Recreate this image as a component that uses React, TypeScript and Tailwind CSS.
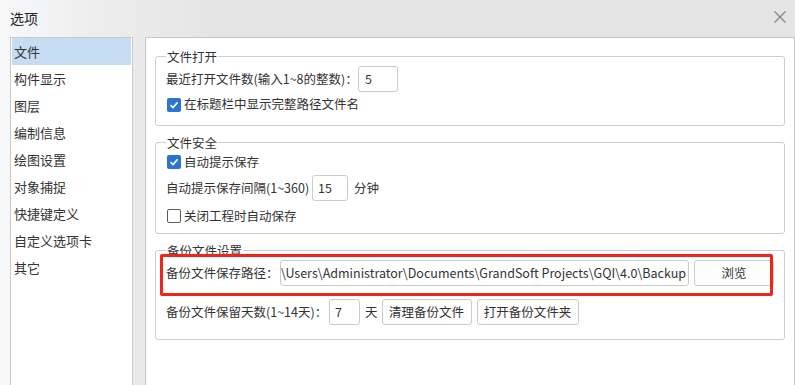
import type { ReactNode } from 'react'

const navItems = ['文件', '构件显示', '图层', '编制信息', '绘图设置', '对象捕捉', '快捷键定义', '自定义选项卡', '其它']

function CheckBox({ checked, label }: { checked?: boolean; label: string }) {
  return (
    <div className="flex items-center">
      {checked ? (
        <span className="ml-[1px] flex h-[14px] w-[14px] items-center justify-center rounded-[2px] bg-[#2a74d6]">
          <svg width="10" height="10" viewBox="0 0 10 10">
            <path d="M1.5 5.2 L4 7.6 L8.6 2.4" fill="none" stroke="#fff" strokeWidth="1.6" />
          </svg>
        </span>
      ) : (
        <span className="ml-[1px] h-[14px] w-[14px] rounded-[2px] border border-[#5a5a5a] bg-white" />
      )}
      <span className="ml-[3px]">{label}</span>
    </div>
  )
}

function Group({ title, children, className }: { title: string; children: ReactNode; className?: string }) {
  return (
    <fieldset className={`rounded-[3px] border border-[#cfcfcf] px-[10px] ${className ?? ''}`}>
      <legend className="px-[1px] leading-[17px]">{title}</legend>
      {children}
    </fieldset>
  )
}

function Button({ label, w }: { label: string; w: string }) {
  return (
    <div
      className={`flex h-[26px] shrink-0 items-center justify-center rounded-[3px] border border-[#cbcbcb] bg-[#fdfdfd] ${w}`}
    >
      {label}
    </div>
  )
}

export default function App() {
  return (
    <div
      className="flex h-[385px] w-[795px] flex-col overflow-hidden bg-[linear-gradient(90deg,#f7f8fa_0px,#ececec_110px,#e4e4e4_220px)] text-[12.5px] text-[#333]"
      style={{ fontFamily: '"Noto Sans CJK SC", "Noto Sans", sans-serif' }}
    >
      {/* Title bar */}
      <div className="flex h-[37px] shrink-0 items-center justify-between pl-[10px] pr-[9px]">
        <span className="text-[14px] text-[#222]">选项</span>
        <svg width="12" height="12" viewBox="0 0 12 12" className="mb-[4px]">
          <path d="M0.5 0.5 L11.5 11.5 M11.5 0.5 L0.5 11.5" stroke="#808080" strokeWidth="1.1" />
        </svg>
      </div>

      <div className="flex flex-1 pl-[10px] pr-[2px]">
        {/* Left nav */}
        <div className="w-[123px] shrink-0 border border-b-0 border-[#c9c9c9] bg-white p-[1px] pt-0 text-[13px]">
          {navItems.map((item, i) => (
            <div
              key={item}
              className={`flex h-[27px] items-center pl-[2px] ${i === 0 ? 'bg-[#c5dcf2]' : ''}`}
            >
              {item}
            </div>
          ))}
        </div>

        {/* Right panel */}
        <div className="ml-[12px] flex-1 border border-b-0 border-[#c6c6c6] bg-white pl-[9px] pr-[9px] pt-[10px]">
          <Group title="文件打开">
            <div className="flex h-[28px] items-center">
              <span className="w-[192px] shrink-0 whitespace-nowrap">最近打开文件数(输入1~8的整数)：</span>
              <div className="flex h-[26px] w-[40px] items-center rounded-[3px] border border-[#cbcbcb] pl-[6px]">5</div>
            </div>
            <div className="flex h-[24px] items-center pb-[1px]">
              <CheckBox checked label="在标题栏中显示完整路径文件名" />
            </div>
            <div className="h-[8px]" />
          </Group>

          <Group title="文件安全" className="mt-[8px]">
            <div className="flex h-[22px] items-center">
              <CheckBox checked label="自动提示保存" />
            </div>
            <div className="flex h-[30px] items-center">
              <span className="w-[146px] shrink-0 whitespace-nowrap">自动提示保存间隔(1~360)</span>
              <div className="flex h-[26px] w-[36px] items-center rounded-[3px] border border-[#cbcbcb] pl-[5px]">15</div>
              <span className="ml-[6px]">分钟</span>
            </div>
            <div className="flex h-[26px] items-center">
              <CheckBox label="关闭工程时自动保存" />
            </div>
            <div className="h-[4px]" />
          </Group>

          <Group title="备份文件设置" className="mt-[8px]">
            <div className="relative flex h-[28px] items-center">
              <span className="w-[114px] shrink-0 whitespace-nowrap">备份文件保存路径：</span>
              <div className="flex h-[26px] w-[409px] shrink-0 items-center justify-end overflow-hidden whitespace-nowrap rounded-[3px] border border-[#cbcbcb] pr-[2px]">
                \Users\Administrator\Documents\GrandSoft Projects\GQI\4.0\Backup
              </div>
              <div className="ml-[5px]">
                <Button label="浏览" w="w-[80px]" />
              </div>
              {/* red annotation */}
              <div className="pointer-events-none absolute -left-[6px] -top-[5px] h-[42px] w-[613px] rounded-[2px] border-[3px] border-[#f2231b]" />
            </div>
            <div className="mt-[11px] flex h-[28px] items-center">
              <span className="w-[163px] shrink-0 whitespace-nowrap">备份文件保留天数(1~14天)：</span>
              <div className="flex h-[26px] w-[31px] items-center rounded-[3px] border border-[#cbcbcb] pl-[5px]">7</div>
              <span className="ml-[5px]">天</span>
              <div className="ml-[4px]">
                <Button label="清理备份文件" w="w-[90px]" />
              </div>
              <div className="ml-[5px]">
                <Button label="打开备份文件夹" w="w-[102px]" />
              </div>
            </div>
            <div className="h-[13px]" />
          </Group>
        </div>
      </div>
    </div>
  )
}
